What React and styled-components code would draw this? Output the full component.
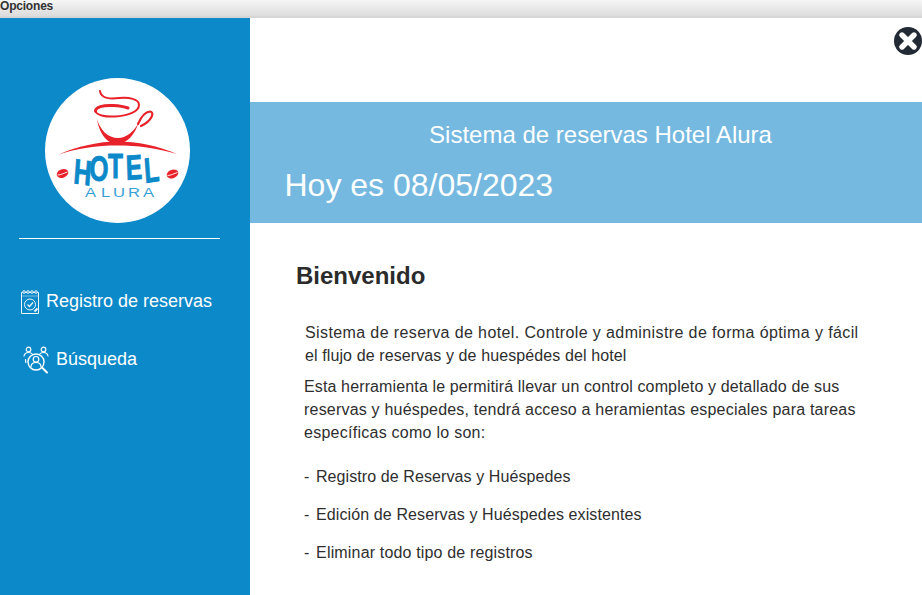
import React from "react";
import styled, { createGlobalStyle } from "styled-components";

const Global = createGlobalStyle`
  html, body { margin: 0; padding: 0; background: #fff; }
  body { font-family: "Liberation Sans", Arial, sans-serif; color: #222; overflow: hidden; }
`;
const Page = styled.div`width: 922px; height: 595px; display: flex; flex-direction: column; overflow: hidden;`;
const MenuBar = styled.div`
  height: 16px; flex: none; box-sizing: content-box;
  background: linear-gradient(#f6f6f6, #dcdcdc);
  border-bottom: 2px solid #d6d6d6;
  font-size: 12px; font-weight: bold; color: #333; letter-spacing: -0.2px;
  line-height: 12px;
`;
const Body = styled.div`flex: 1; display: flex; min-height: 0;`;
const Sidebar = styled.aside`
  width: 250px; flex: none; background: #0c89c9; color: #fff;
  display: flex; flex-direction: column; padding: 60px 0 0 19px; box-sizing: border-box;
`;
const LogoCircle = styled.div`
  width: 145px; height: 145px; border-radius: 50%; background: #fff; flex: none; margin-left: 26px;
  svg { display: block; }
`;
const Divider = styled.hr`
  width: 201px; height: 1px; border: 0; background: #fff; margin: 15px 0 0; flex: none;
`;
const Nav = styled.nav`padding-top: 49px; display: flex; flex-direction: column; gap: 31px;`;
const NavItem = styled.a`
  display: flex; align-items: center; height: 27px; font-size: 18px; color: #fff;
  padding-left: ${p => p.$left}px; gap: ${p => p.$gap}px;
  svg { flex: none; }
`;
const Main = styled.main`flex: 1; display: flex; flex-direction: column; min-width: 0;`;
const TopStrip = styled.div`height: 84px; flex: none; display: flex; justify-content: flex-end; padding: 9px 0 0; box-sizing: border-box;`;
const Close = styled.div`width: 28px; height: 28px; svg { display: block; }`;
const Banner = styled.section`
  height: 121px; flex: none; background: #75b9e0; color: #fff; box-sizing: border-box;
  padding-top: 19px;
`;
const BannerTitle = styled.div`font-size: 24px; line-height: 28px; text-align: center; padding-left: 29px;`;
const BannerDate = styled.div`font-size: 32px; line-height: 38px; padding: 17px 0 0 34.5px;`;
const Content = styled.section`padding: 39px 0 0 46px; flex: 1;`;
const Heading = styled.h1`font-size: 24px; line-height: 28px; font-weight: bold; margin: 0; color: #2b2b2b;`;
const Para = styled.div`margin: ${p => p.$top}px 0 0 ${p => p.$left}px;`;
const Line = styled.div`
  font-size: 16px; line-height: 23px; color: #2e2e2e; white-space: nowrap;
  letter-spacing: ${p => p.$ls}px;
`;
const Dash = styled.span`margin-right: 2px;`;
const List = styled.div`margin: 21px 0 0 8px; display: flex; flex-direction: column; gap: 15px;`;

const Logo = () => (
  <svg width="145" height="145" viewBox="0 0 145 145">
    <g fill="none" stroke="#e8222a" strokeLinecap="round">
      <path d="M55 13 C56 21 66 21 74 20 C84 19 94 21 94 27 C94 34 82 38 70 38.5 C60 39 51 37 50.5 33" strokeWidth="2" />
      <path d="M50.5 33 C50.5 29 58 27 68 27.5 C74 27.8 79 28.5 83 30" strokeWidth="3" />
      <path d="M93 46 C96 39 100 34 105 33.5 C110 34 107 43 96 48" strokeWidth="2.2" />
    </g>
    <path d="M52 41 C54 55 62 66 72 66 C82 66 90 56 93.5 45 C89 53 82 60 73 60 C63 60 55 52 52 41 Z" fill="#e8222a" />
    <path d="M13 77 C32 68 55 63.5 72 63.5 C92 63.5 114 68 132 76 C112 70 92 67.5 72 67.5 C52 67.5 32 70 13 77 Z" fill="#e8222a" />
    <g fill="#e8222a">
      <ellipse cx="17.5" cy="95.5" rx="6" ry="4.2" transform="rotate(-20 17.5 95.5)" />
      <ellipse cx="127.5" cy="96" rx="6" ry="4.2" transform="rotate(-20 127.5 96)" />
    </g>
    <path d="M12.5 97 C16 97 19 95 22.5 94 M122.5 97.5 C126 97.5 129 95.5 132.5 94.5" stroke="#fff" strokeWidth="0.9" fill="none" />
    <text transform="scale(0.7 1)" x="40 63 90 116 143" y="105 102 100 102 105" rotate="6 3 0 -3 -6" fontFamily="'Liberation Sans', Arial, sans-serif" fontWeight="bold" fontSize="35" fill="#0c89c9" stroke="#0c89c9" strokeWidth="0.9">HOTEL</text>
    <text transform="scale(1.35 1)" x="29.6 41.5 50.4 61.5 72.6" y="119" fontFamily="'Liberation Sans', Arial, sans-serif" fontSize="12.3" fill="#3a9fd6">ALURA</text>
  </svg>
);

const CalendarIcon = () => (
  <svg width="20" height="26" viewBox="0 0 20 26" fill="none" stroke="#fff" strokeWidth="1" opacity="0.92">
    <path d="M3 3.5 H1.5 V24.5 H18.5 V3.5 H17" />
    <path d="M1.5 7 H18.5" strokeOpacity="0.5" />
    <path d="M5 3.5 H7 M9 3.5 H11 M13 3.5 H15" />
    <circle cx="4" cy="3" r="1.3" /><circle cx="8" cy="3" r="1.3" /><circle cx="12" cy="3" r="1.3" /><circle cx="16" cy="3" r="1.3" />
    <circle cx="10" cy="15.5" r="5.5" />
    <path d="M7.5 15.5 L9.5 17.5 L13 13.5" strokeWidth="1.3" />
    <path d="M14.5 22.5 L17.5 19.5" strokeWidth="2" />
  </svg>
);

const SearchPeopleIcon = () => (
  <svg width="26" height="28" viewBox="0 0 26 28" fill="none" stroke="#fff" strokeWidth="1.2" strokeLinecap="round">
    <circle cx="5.5" cy="3.5" r="2.3" /><circle cx="20.5" cy="3.5" r="2.3" />
    <path d="M1 10 C1.5 7.5 3.5 6.5 5.5 6.5 C7 6.5 8.4 7 9.2 8" />
    <path d="M25 10 C24.5 7.5 22.5 6.5 20.5 6.5 C19 6.5 17.6 7 16.8 8" />
    <circle cx="13" cy="16" r="8" strokeWidth="1.4" />
    <circle cx="13" cy="13.3" r="2.8" />
    <path d="M8 21 C8 18 10 16.5 13 16.5 C16 16.5 18 18 18 21" />
    <path d="M19.5 22 L24 26.5" strokeWidth="2" />
    <path d="M2.5 13.5 L2.8 16.5" />
  </svg>
);

const CloseIcon = () => (
  <svg width="28" height="28" viewBox="0 0 28 28">
    <circle cx="14" cy="14" r="14" fill="#222a35" />
    <path d="M8 8 L20 20 M20 8 L8 20" stroke="#fff" strokeWidth="5.4" strokeLinecap="round" />
  </svg>
);

export default function App() {
  return (
    <Page>
      <Global />
      <MenuBar>Opciones</MenuBar>
      <Body>
        <Sidebar>
          <LogoCircle><Logo /></LogoCircle>
          <Divider />
          <Nav>
            <NavItem $left={1} $gap={6}><CalendarIcon />Registro de reservas</NavItem>
            <NavItem $left={4} $gap={7}><SearchPeopleIcon />Búsqueda</NavItem>
          </Nav>
        </Sidebar>
        <Main>
          <TopStrip><Close><CloseIcon /></Close></TopStrip>
          <Banner>
            <BannerTitle>Sistema de reservas Hotel Alura</BannerTitle>
            <BannerDate>Hoy es 08/05/2023</BannerDate>
          </Banner>
          <Content>
            <Heading>Bienvenido</Heading>
            <Para $top={31} $left={9}>
              <Line $ls={0.39}>Sistema de reserva de hotel. Controle y administre de forma óptima y fácil</Line>
              <Line $ls={0.105}>el flujo de reservas y de huespédes del hotel</Line>
            </Para>
            <Para $top={8} $left={8}>
              <Line $ls={0.13}>Esta herramienta le permitirá llevar un control completo y detallado de sus</Line>
              <Line $ls={0.2}>reservas y huéspedes, tendrá acceso a heramientas especiales para tareas</Line>
              <Line $ls={0.26}>específicas como lo son:</Line>
            </Para>
            <List>
              <Line $ls={0.09}><Dash>-</Dash> Registro de Reservas y Huéspedes</Line>
              <Line $ls={0.11}><Dash>-</Dash> Edición de Reservas y Huéspedes existentes</Line>
              <Line $ls={0.16}><Dash>-</Dash> Eliminar todo tipo de registros</Line>
            </List>
          </Content>
        </Main>
      </Body>
    </Page>
  );
}
